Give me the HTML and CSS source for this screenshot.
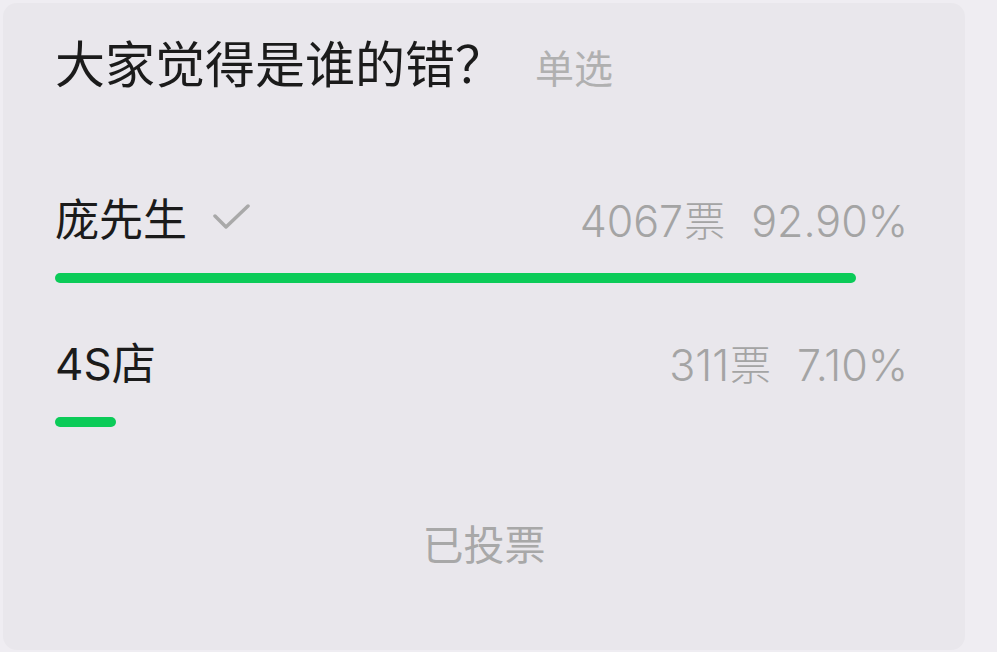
FILE: index.html
```html
<!DOCTYPE html>
<html lang="zh">
<head>
<meta charset="utf-8">
<link rel="stylesheet" href="styles.css">
</head>
<body>
<div class="card">
  <div class="title"><span class="q">大家觉得是谁的错？</span><span class="type">单选</span></div>
  <div class="option">
    <div class="row">
      <div class="label">庞先生<svg class="check" width="38" height="28" viewBox="0 0 38 28"><polyline points="2,12 13,23 35,2" fill="none" stroke="#a9a9a9" stroke-width="3.5" stroke-linecap="round" stroke-linejoin="round"/></svg></div>
      <div class="stat">4067<span class="unit">票</span><span class="pct">92.90%</span></div>
    </div>
    <div class="track"><div class="bar" style="width:92.9%"></div></div>
  </div>
  <div class="option">
    <div class="row">
      <div class="label">4S店</div>
      <div class="stat">311<span class="unit">票</span><span class="pct">7.10%</span></div>
    </div>
    <div class="track"><div class="bar" style="width:7.1%"></div></div>
  </div>
  <div class="voted">已投票</div>
</div>
</body>
</html>
```
FILE: styles.css
```css
html, body {
  margin: 0;
  padding: 0;
}
body {
  background: #efedf2;
  font-family: "Noto Sans CJK SC", "Noto Sans", sans-serif;
  width: 997px;
  height: 652px;
  overflow: hidden;
}
.card {
  background: #e9e7ec;
  margin: 3px 32px 0 3px;
  height: 647px;
  border-radius: 14px;
  padding: 0 0 0 52px;
  box-sizing: border-box;
}
.title {
  display: flex;
  align-items: baseline;
  padding-top: 28px;
  height: 60px;
}
.q {
  font-size: 50px;
  line-height: 60px;
  color: #1b1b1b;
}
.type {
  font-size: 39px;
  color: #b0b0b0;
  margin-left: 30px;
}
.option {
  width: 862px;
}
.row {
  display: flex;
  justify-content: space-between;
  align-items: center;
  height: 50px;
  width: 853px;
}
.label {
  display: flex;
  align-items: center;
  font-family: "Inter", "Noto Sans CJK SC", sans-serif;
  font-size: 44px;
  color: #1b1b1b;
  line-height: 50px;
}
.check {
  margin-left: 26px;
  margin-top: -4px;
}
.stat {
  font-family: "Inter", "Noto Sans CJK SC", sans-serif;
  font-size: 43px;
  font-weight: 300;
  color: #a4a4a4;
  line-height: 50px;
}
.unit {
  font-family: "Noto Sans CJK SC", sans-serif;
  font-size: 41px;
  margin-left: 1px;
  position: relative;
  top: -1px;
}
.pct {
  margin-left: 26px;
}
.track {
  height: 10px;
  margin-top: 28px;
}
.bar {
  height: 10px;
  background: #0bcb58;
  border-radius: 5px;
}
.title + .option {
  margin-top: 104px;
}
.option + .option {
  margin-top: 56px;
}
.voted {
  text-align: center;
  font-size: 41px;
  color: #a8a8a8;
  margin-top: 90px;
  line-height: 50px;
  margin-left: -52px;
}
```
